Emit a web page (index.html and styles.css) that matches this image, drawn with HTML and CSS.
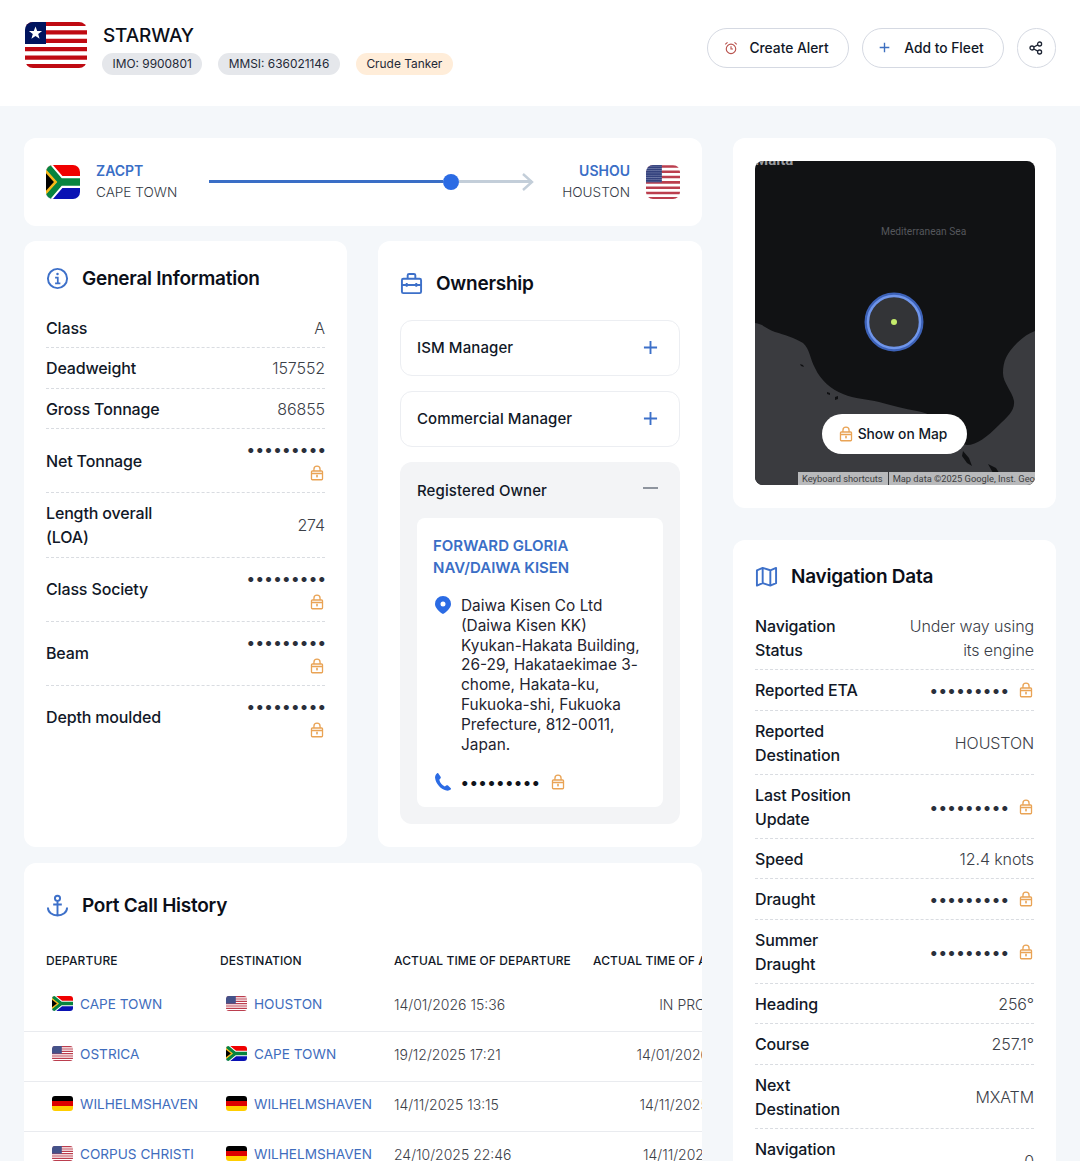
FILE: index.html
```html
<!DOCTYPE html>
<html lang="en">

<head>
  <meta charset="UTF-8" />
  <title>STARWAY – Vessel Details</title>
  <link rel="stylesheet" href="styles.css">
</head>

<body>

  <svg class="sprite" xmlns="http://www.w3.org/2000/svg">
    <defs>
      <pattern id="us-stars" width="3" height="3" patternUnits="userSpaceOnUse">
        <rect width="3" height="3" fill="#2b3a78" />
        <circle cx="1.5" cy="1.5" r=".7" fill="#c9cfe6" />
      </pattern>
    </defs>
    <symbol id="flag-lr" viewBox="0 0 62 46" preserveAspectRatio="none">
      <rect width="62" height="46" fill="#fff" />
      <path d="M0 2h62M0 10.4h62M0 18.8h62M0 27.2h62M0 35.6h62M0 44h62" stroke="#bf0a12" stroke-width="4.2" />
      <rect width="21" height="22" fill="#00145e" />
      <path d="M10.5 4.5l1.7 4.6h4.9l-3.9 3 1.4 4.7-4.1-2.8-4.1 2.8 1.4-4.7-3.9-3h4.9z" fill="#fff" />
    </symbol>
    <symbol id="flag-za" viewBox="0 0 60 45" preserveAspectRatio="none">
      <rect width="60" height="22.5" fill="#f00000" />
      <rect y="22.5" width="60" height="22.5" fill="#0a12b4" />
      <path d="M0 0L26 22.5H60M0 45L26 22.5" fill="none" stroke="#fff" stroke-width="16" />
      <path d="M0 0L26 22.5H60M0 45L26 22.5" fill="none" stroke="#07843f" stroke-width="10" />
      <path d="M0 6L20 22.5L0 39z" fill="#f8b818" />
      <path d="M0 11L14 22.5L0 34z" fill="#000" />
    </symbol>
    <symbol id="flag-us" viewBox="0 0 60 45" preserveAspectRatio="none">
      <rect width="60" height="45" fill="#fff" />
      <path d="M0 2h60M0 9h60M0 16h60M0 23h60M0 30h60M0 37h60M0 44h60" stroke="#bb3e4e" stroke-width="3.4" />
      <rect width="28" height="23" fill="url(#us-stars)" />
    </symbol>
    <symbol id="flag-de" viewBox="0 0 60 45" preserveAspectRatio="none">
      <rect width="60" height="15" fill="#000" />
      <rect y="15" width="60" height="15" fill="#dd0000" />
      <rect y="30" width="60" height="15" fill="#ffce00" />
    </symbol>
    <symbol id="i-lock" viewBox="0 0 16 18">
      <rect x="1.7" y="6.7" width="12.6" height="10" rx="1" fill="none" stroke="currentColor" stroke-width="1.5" />
      <path d="M4.5 6.7V4.600a3.500 3.500 0 0 1 7 0v2.100M1.700 9.600h12.600" fill="none" stroke="currentColor" stroke-width="1.5" />
      <rect x="7.100" y="11" width="1.800" height="3" fill="currentColor" />
    </symbol>
    <symbol id="i-plus" viewBox="0 0 16 16">
      <path d="M8 1v14M1 8h14" fill="none" stroke="currentColor" stroke-width="2" />
    </symbol>
  </svg>

  <header class="topbar">
    <div class="vessel">
      <svg class="flag flag-main"><use href="#flag-lr" /></svg>
      <div>
        <h1 class="vessel-name">STARWAY</h1>
        <div class="chips">
          <span class="chip">IMO: 9900801</span>
          <span class="chip">MMSI: 636021146</span>
          <span class="chip chip-type">Crude Tanker</span>
        </div>
      </div>
    </div>
    <div class="actions">
      <button class="btn">
        <svg class="btn-icon alarm" viewBox="0 0 16 16" fill="none" stroke="currentColor" stroke-width="1.3">
          <circle cx="8" cy="9" r="5.4" />
          <path d="M8 6v3.2h2.3M1.4 3.8L4 1.6M14.6 3.8L12 1.6" />
        </svg>
        Create Alert
      </button>
      <button class="btn">
        <svg class="btn-icon plus-blue"><use href="#i-plus" /></svg>
        Add to Fleet
      </button>
      <button class="btn btn-round" aria-label="Share">
        <svg class="share" viewBox="0 0 14 14" fill="none" stroke="#1d2433" stroke-width="1.3">
          <circle cx="3" cy="7" r="2" />
          <circle cx="10.6" cy="3" r="2" />
          <circle cx="10.6" cy="11" r="2" />
          <path d="M4.8 6l4-2.1M4.8 8l4 2.1" />
        </svg>
      </button>
    </div>
  </header>

  <main class="layout">
    <div class="col-main">

      <section class="card route">
        <svg class="flag flag-route"><use href="#flag-za" /></svg>
        <div class="port">
          <div class="port-code">ZACPT</div>
          <div class="port-name">CAPE TOWN</div>
        </div>
        <div class="track">
          <div class="track-done"></div>
          <div class="track-knob"></div>
          <div class="track-left"></div>
          <svg class="track-arrow" viewBox="0 0 14 20" fill="none" stroke="#c3ced9" stroke-width="2.4">
            <path d="M3 2l9 8-9 8" />
          </svg>
        </div>
        <div class="port port-end">
          <div class="port-code">USHOU</div>
          <div class="port-name">HOUSTON</div>
        </div>
        <svg class="flag flag-route"><use href="#flag-us" /></svg>
      </section>

      <div class="two-cols">
        <section class="card card-general">
          <h2 class="card-title">
            <svg class="title-icon" viewBox="0 0 24 24" fill="none" stroke="currentColor" stroke-width="2">
              <circle cx="12" cy="12" r="10" />
              <path d="M9.5 11H12.3V17M9.5 17H15" stroke-width="1.8" />
              <circle cx="12" cy="7.4" r="1.3" fill="currentColor" stroke="none" />
            </svg>
            General Information
          </h2>
          <div class="row"><span class="label">Class</span><span class="value">A</span></div>
          <div class="row"><span class="label">Deadweight</span><span class="value">157552</span></div>
          <div class="row"><span class="label">Gross Tonnage</span><span class="value">86855</span></div>
          <div class="row"><span class="label">Net Tonnage</span><span class="value stacked"><span class="dots">•••••••••</span><svg class="lock"><use href="#i-lock" /></svg></span></div>
          <div class="row"><span class="label">Length overall (LOA)</span><span class="value">274</span></div>
          <div class="row"><span class="label">Class Society</span><span class="value stacked"><span class="dots">•••••••••</span><svg class="lock"><use href="#i-lock" /></svg></span></div>
          <div class="row"><span class="label">Beam</span><span class="value stacked"><span class="dots">•••••••••</span><svg class="lock"><use href="#i-lock" /></svg></span></div>
          <div class="row row-last"><span class="label">Depth moulded</span><span class="value stacked"><span class="dots">•••••••••</span><svg class="lock"><use href="#i-lock" /></svg></span></div>
        </section>

        <section class="card card-owner">
          <h2 class="card-title">
            <svg class="title-icon" viewBox="0 0 24 24" fill="none" stroke="currentColor" stroke-width="2">
              <rect x="2" y="7" width="20" height="15" rx="1.5" />
              <path d="M8 7V3.500A1.500 1.500 0 0 1 9.500 2h5A1.500 1.500 0 0 1 16 3.500V7M2 13.500h20M7 11.500v4M17 11.500v4" />
            </svg>
            Ownership
          </h2>
          <div class="acc">
            <span>ISM Manager</span>
            <svg class="acc-plus"><use href="#i-plus" /></svg>
          </div>
          <div class="acc">
            <span>Commercial Manager</span>
            <svg class="acc-plus"><use href="#i-plus" /></svg>
          </div>
          <div class="acc-open">
            <div class="acc-head">
              <span>Registered Owner</span>
              <span class="acc-minus"></span>
            </div>
            <div class="owner-box">
              <div class="owner-name">FORWARD GLORIA NAV/DAIWA KISEN</div>
              <div class="owner-line">
                <svg class="owner-icon" viewBox="0 0 16 18">
                  <path fill-rule="evenodd" d="M8 0a8 8 0 0 1 8 8c0 3.800-4.500 8-8 10C4.500 16 0 11.800 0 8a8 8 0 0 1 8-8zm0 5.500a2.500 2.500 0 1 0 0 5 2.500 2.500 0 0 0 0-5z" fill="currentColor" />
                </svg>
                <p class="owner-addr">Daiwa Kisen Co Ltd<br>(Daiwa Kisen KK)<br>Kyukan-Hakata Building, 26-29, Hakataekimae 3-chome, Hakata-ku, Fukuoka-shi, Fukuoka Prefecture, 812-0011, Japan.</p>
              </div>
              <div class="owner-phone">
                <svg class="owner-icon" viewBox="0 0 16 18">
                  <path d="M3.200 0.300L5.600 3.800C6 4.400 5.900 5.100 5.400 5.600L4.300 6.800C5 9.800 7 12.300 9.800 13.500L11.200 12.500C11.800 12.100 12.500 12.100 13 12.600L15.800 15.200C16.200 15.600 16.100 16.200 15.700 16.500C14.500 17.500 12.900 17.900 11.300 17.500C5.300 16 1 10.800 0.100 5C-0.200 3.100 0.800 1.300 2.200 0.200C2.500 0 3 0 3.200 0.300Z" fill="currentColor" />
                </svg>
                <span class="dots">•••••••••</span>
                <svg class="lock"><use href="#i-lock" /></svg>
              </div>
            </div>
          </div>
        </section>
      </div>

      <section class="card card-ports">
        <h2 class="card-title">
          <svg class="title-icon" viewBox="0 0 24 24" fill="none" stroke="currentColor" stroke-width="2">
            <circle cx="12" cy="4.500" r="2.700" />
            <path d="M12 7.200V22.500M7.500 11h9M2 14c0 5 4.500 8.500 10 8.500S22 19 22 14" />
          </svg>
          Port Call History
        </h2>
        <div class="table-clip">
          <table class="ports">
            <thead>
              <tr>
                <th class="col-a">Departure</th>
                <th class="col-b">Destination</th>
                <th class="col-c">Actual Time of Departure</th>
                <th class="col-d">Actual Time of Arrival</th>
              </tr>
            </thead>
            <tbody>
              <tr>
                <td><a class="port-link"><svg class="flag flag-small"><use href="#flag-za" /></svg>CAPE TOWN</a></td>
                <td><a class="port-link"><svg class="flag flag-small"><use href="#flag-us" /></svg>HOUSTON</a></td>
                <td>14/01/2026 15:36</td>
                <td class="ta-right">IN PROGRESS</td>
              </tr>
              <tr>
                <td><a class="port-link"><svg class="flag flag-small"><use href="#flag-us" /></svg>OSTRICA</a></td>
                <td><a class="port-link"><svg class="flag flag-small"><use href="#flag-za" /></svg>CAPE TOWN</a></td>
                <td>19/12/2025 17:21</td>
                <td class="ta-right">14/01/2026 08:25</td>
              </tr>
              <tr>
                <td><a class="port-link"><svg class="flag flag-small"><use href="#flag-de" /></svg>WILHELMSHAVEN</a></td>
                <td><a class="port-link"><svg class="flag flag-small"><use href="#flag-de" /></svg>WILHELMSHAVEN</a></td>
                <td>14/11/2025 13:15</td>
                <td class="ta-right">14/11/2025 08:30</td>
              </tr>
              <tr>
                <td><a class="port-link"><svg class="flag flag-small"><use href="#flag-us" /></svg>CORPUS CHRISTI</a></td>
                <td><a class="port-link"><svg class="flag flag-small"><use href="#flag-de" /></svg>WILHELMSHAVEN</a></td>
                <td>24/10/2025 22:46</td>
                <td class="ta-right">14/11/2025 06:15</td>
              </tr>
            </tbody>
          </table>
        </div>
      </section>
    </div>

    <aside class="col-side">
      <section class="card card-map">
        <div class="map">
          <svg class="map-land" viewBox="0 0 280 324">
            <path d="M0 162C8 163 12 168 20 171C30 174 38 176 48 182C55 188 55 198 60 207C66 220 76 228 88 233C100 238 112 238 124 241C136 244 150 248 162 250C174 252 184 258 192 268C198 276 204 283 212 284C222 284 232 276 244 264C252 256 260 250 259 240C257 230 248 222 248 212C248 200 252 192 262 182C268 176 274 172 280 170V324H0Z" fill="#3a3b3f" />
            <path d="M208 290l6 7 3 8-5-3-5-7zM233 303l8 4 5 8-8-3zM45 203l3 1 1 2-3-1zM72 231l3 1 0 2-3-1zM80 236l3-1 0 3-3 1z" fill="#101113" />
            <circle cx="139" cy="161" r="28" fill="#333437" stroke="#3d62b8" stroke-width="3" />
            <circle cx="139" cy="161" r="26" fill="none" stroke="#6f95ea" stroke-width="2.5" />
            <circle cx="139" cy="161" r="3" fill="#c5ec6b" />
          </svg>
          <span class="map-malta">Malta</span>
          <span class="map-sea">Mediterranean Sea</span>
          <button class="map-btn"><svg class="lock"><use href="#i-lock" /></svg>Show on Map</button>
          <div class="map-attr">
            <span>Keyboard shortcuts</span>
            <span>Map data ©2025 Google, Inst. Geogr. Nacional</span>
          </div>
        </div>
      </section>

      <section class="card card-nav">
        <h2 class="card-title">
          <svg class="title-icon" viewBox="0 0 24 24" fill="none" stroke="currentColor" stroke-width="2">
            <path d="M2 5.500L8 3L16 5.500L22 3V19L16 21.500L8 19L2 21.500ZM8 3V19M16 5.500V21.500" stroke-linejoin="round" />
          </svg>
          Navigation Data
        </h2>
        <div class="row"><span class="label">Navigation Status</span><span class="value">Under way using its engine</span></div>
        <div class="row"><span class="label">Reported ETA</span><span class="value inline"><span class="dots">•••••••••</span><svg class="lock"><use href="#i-lock" /></svg></span></div>
        <div class="row"><span class="label">Reported Destination</span><span class="value">HOUSTON</span></div>
        <div class="row"><span class="label">Last Position Update</span><span class="value inline"><span class="dots">•••••••••</span><svg class="lock"><use href="#i-lock" /></svg></span></div>
        <div class="row"><span class="label">Speed</span><span class="value">12.4 knots</span></div>
        <div class="row"><span class="label">Draught</span><span class="value inline"><span class="dots">•••••••••</span><svg class="lock"><use href="#i-lock" /></svg></span></div>
        <div class="row"><span class="label">Summer Draught</span><span class="value inline"><span class="dots">•••••••••</span><svg class="lock"><use href="#i-lock" /></svg></span></div>
        <div class="row"><span class="label">Heading</span><span class="value">256°</span></div>
        <div class="row"><span class="label">Course</span><span class="value">257.1°</span></div>
        <div class="row"><span class="label">Next Destination</span><span class="value">MXATM</span></div>
        <div class="row"><span class="label">Navigation<br>Area</span><span class="value">0</span></div>
      </section>
    </aside>
  </main>

</body>

</html>
```

FILE: styles.css
```css
html,
body {
  height: 1161px;
  overflow: hidden;
}

body {
  margin: 0;
  font-family: Inter, "Liberation Sans", sans-serif;
  font-size: 16px;
  color: #111827;
  background: #f4f7fa;
}

h1,
h2,
p {
  margin: 0;
}

.sprite {
  display: block;
  width: 0;
  height: 0;
}

.flag {
  display: block;
  flex: none;
  overflow: hidden;
}

.flag-main {
  width: 62px;
  height: 46px;
  border-radius: 8px;
}

.flag-route {
  width: 34px;
  height: 34px;
  border-radius: 7px;
}

.flag-small {
  width: 21px;
  height: 15px;
  border-radius: 3px;
}

/* header */
.topbar {
  height: 106px;
  box-sizing: border-box;
  background: #fff;
  padding: 22px 24px 0 25px;
  display: flex;
  justify-content: space-between;
  align-items: flex-start;
}

.vessel {
  display: flex;
  gap: 15px;
}

.vessel-name {
  margin-left: 1px;
  font-size: 19px;
  font-weight: 500;
  letter-spacing: -0.15px;
  line-height: 28px;
  color: #0b0f19;
}

.chips {
  display: flex;
  gap: 16px;
  margin-top: 3px;
}

.chip {
  height: 22px;
  line-height: 22px;
  padding: 0 10.500px;
  border-radius: 11px;
  background: #e5e7eb;
  font-size: 11.900px;
  color: #1f2937;
}

.chip-type {
  background: #ffedd9;
}

.actions {
  display: flex;
  gap: 13px;
  padding-top: 6px;
}

.btn {
  width: 142px;
  height: 40px;
  border: 1px solid #d5d9e2;
  border-radius: 20px;
  background: #fff;
  font: 500 13.800px Inter, "Liberation Sans", sans-serif;
  color: #111827;
  display: flex;
  align-items: center;
  justify-content: center;
  gap: 11px;
  padding: 0 3px 1px 0;
}

.btn-round {
  width: 39px;
  padding-right: 1px;
}

.btn-icon {
  width: 14px;
  height: 14px;
}

.alarm {
  color: #b9544f;
}

.plus-blue {
  width: 11px;
  height: 11px;
  color: #3d6fc0;
  margin-right: 3px;
}

.share {
  width: 14px;
  height: 14px;
}

/* layout */
.layout {
  display: grid;
  grid-template-columns: 678px 323px;
  gap: 31px;
  padding: 32px 24px 0;
}

.col-main {
  display: flex;
  flex-direction: column;
  gap: 15px;
}

.col-side {
  display: flex;
  flex-direction: column;
  gap: 32px;
}

.card {
  background: #fff;
  border-radius: 12px;
}

.card-title {
  display: flex;
  align-items: center;
  gap: 13px;
  padding-top: 2px;
  font-size: 19px;
  font-weight: 600;
  letter-spacing: -0.25px;
  line-height: 28px;
  color: #0b0f19;
}

.title-icon {
  width: 23px;
  height: 23px;
  margin-top: -2px;
  color: #3d70c9;
  flex: none;
}

/* route */
.route {
  height: 88px;
  box-sizing: border-box;
  padding: 0 22px;
  display: flex;
  align-items: center;
}

.port {
  margin: -2px 0 0 16px;
  font-size: 14px;
  line-height: 21px;
}

.port-end {
  margin-left: 0;
  margin-right: 16px;
  text-align: right;
}

.port-code {
  font-weight: 600;
  color: #3a6ec6;
}

.port-name {
  margin-top: 1px;
  font-size: 13.600px;
  font-weight: 300;
  color: #333a45;
}

.track {
  flex: 1;
  display: flex;
  align-items: center;
  margin: -1px 28px 0 32px;
}

.track-done {
  width: 234px;
  height: 3px;
  background: #3a6ec6;
}

.track-knob {
  width: 16px;
  height: 16px;
  flex: none;
  border-radius: 50%;
  background: #2b6be4;
}

.track-left {
  flex: 1;
  height: 3px;
  background: #c3ced9;
}

.track-arrow {
  width: 14px;
  height: 20px;
  flex: none;
  margin-left: -12px;
}

/* info rows */
.two-cols {
  display: grid;
  grid-template-columns: 323px 324px;
  gap: 31px;
  margin-bottom: 1px;
}

.card-general {
  height: 606px;
  box-sizing: border-box;
  padding: 22px 22px 0;
}

.card-general .card-title {
  margin-bottom: 14.500px;
}

.row {
  display: flex;
  justify-content: space-between;
  align-items: center;
  gap: 10px;
  padding: 8px 0 7.500px;
  border-bottom: 1px dashed #d9dce1;
  line-height: 24px;
}

.row-last {
  border-bottom: none;
}

.label {
  flex: 0 0 120px;
  font-weight: 500;
  letter-spacing: -0.150px;
  color: #111827;
}

.value {
  max-width: 130px;
  text-align: right;
  font-weight: 300;
  letter-spacing: -0.100px;
  color: #3b4048;
}

.stacked {
  display: flex;
  flex-direction: column;
  align-items: flex-end;
  max-width: none;
}

.inline {
  display: flex;
  align-items: center;
  gap: 9px;
  max-width: none;
  padding-right: 1px;
}

.dots {
  font-weight: 700;
  letter-spacing: 1.300px;
  color: #2a2f3a;
  line-height: 24px;
  white-space: nowrap;
}

.stacked .dots {
  margin-right: -2px;
}

.lock {
  width: 14px;
  height: 16px;
  flex: none;
  color: #e9a355;
}

.stacked .lock {
  margin: 4px 1px 3.500px 0;
}

/* ownership */
.card-owner {
  padding: 27px 22px 23px;
}

.card-owner .card-title {
  margin-bottom: 22px;
}

.acc {
  height: 56px;
  box-sizing: border-box;
  border: 1px solid #eceef2;
  border-radius: 12px;
  padding: 0 21px 2px 16px;
  margin-bottom: 15px;
  display: flex;
  justify-content: space-between;
  align-items: center;
  font-size: 15px;
  font-weight: 500;
  letter-spacing: 0.100px;
}

.acc-plus {
  width: 15px;
  height: 15px;
  color: #3d70c9;
}

.acc-open {
  background: #f3f4f6;
  border-radius: 12px;
  padding: 0 17px 17px;
}

.acc-head {
  height: 56px;
  display: flex;
  justify-content: space-between;
  align-items: center;
  font-size: 15px;
  font-weight: 500;
  letter-spacing: 0.100px;
  padding-right: 5px;
}

.acc-minus {
  width: 15px;
  height: 2.500px;
  background: #8e949e;
  margin-top: -4px;
}

.owner-box {
  background: #fff;
  border-radius: 8px;
  padding: 17px 16px 13px;
}

.owner-name {
  font-size: 15px;
  font-weight: 600;
  line-height: 22px;
  color: #3a6ec6;
  margin-bottom: 15px;
}

.owner-line {
  display: flex;
  gap: 10px;
  align-items: flex-start;
}

.owner-icon {
  width: 16px;
  height: 18px;
  flex: none;
  margin: 2px 2px 0;
  color: #2b6be4;
}

.owner-addr {
  font-size: 15.400px;
  line-height: 19.800px;
  color: #1f2430;
  font-weight: 400;
  margin: 2px 0 0 -2px;
}

.owner-phone {
  display: flex;
  align-items: center;
  gap: 11px;
  margin-top: 16px;
}

.owner-phone .owner-icon {
  margin: 0 2px;
}

.owner-phone .dots {
  margin-left: -3px;
  color: #10131a;
}

.owner-phone .lock {
  margin-left: -1px;
}

/* port calls */
.card-ports {
  padding-top: 27px;
  height: 400px;
}

.card-ports .card-title {
  padding-left: 22px;
  margin-bottom: 20px;
}

.table-clip {
  overflow: hidden;
}

.ports {
  border-collapse: collapse;
  table-layout: fixed;
  width: 749px;
}

.col-a,
.col-b {
  width: 174px;
}

.col-c {
  width: 199px;
}

.col-d {
  width: 202px;
}

.ports th {
  height: 41px;
  box-sizing: border-box;
  padding: 0 0 1px 22px;
  text-align: left;
  font-size: 12px;
  font-weight: 500;
  letter-spacing: 0.100px;
  text-transform: uppercase;
  white-space: nowrap;
  color: #111827;
}

.ports td {
  height: 50px;
  box-sizing: border-box;
  padding: 0 0 3px 22px;
  border-bottom: 1px solid #e9ebef;
  font-size: 14px;
  font-weight: 300;
  color: #3b4048;
  white-space: nowrap;
}

.ports td.ta-right {
  padding: 0 22px 3px 0;
  text-align: right;
}

.port-link {
  display: flex;
  align-items: center;
  gap: 7px;
  margin: -2px 0 0 6px;
  font-size: 13.600px;
  font-weight: 400;
  color: #3f6dbd;
}

/* map */
.card-map {
  padding: 23px 22px;
  height: 370px;
  box-sizing: border-box;
}

.map {
  position: relative;
  height: 324px;
  width: 280px;
  background: #111214;
  border-radius: 8px;
  overflow: hidden;
}

.map-land {
  display: block;
  width: 280px;
  height: 324px;
}

.map-malta {
  position: absolute;
  left: 0;
  top: -10px;
  font-family: Roboto, sans-serif;
  font-size: 15px;
  font-weight: 700;
  color: #9a9b9f;
}

.map-sea {
  position: absolute;
  left: 126px;
  top: 65px;
  font-family: Roboto, sans-serif;
  font-size: 10.200px;
  color: #55575c;
  white-space: nowrap;
}

.map-btn {
  position: absolute;
  left: 67px;
  top: 253px;
  width: 145px;
  height: 40px;
  border: none;
  border-radius: 20px;
  background: #fff;
  font: 500 13.800px Inter, "Liberation Sans", sans-serif;
  color: #111827;
  display: flex;
  align-items: center;
  justify-content: center;
  gap: 5px;
  padding: 0 3px 0 0;
}

.map-attr {
  position: absolute;
  left: 43px;
  top: 311px;
  height: 13px;
  display: flex;
  gap: 1px;
  font-family: Roboto, sans-serif;
  font-size: 9.300px;
  line-height: 13px;
  color: #3c3d40;
  white-space: nowrap;
}

.map-attr span {
  background: #b8b9bb;
  padding: 0 5px 0 4px;
}

.card-nav {
  padding: 21px 22px 0;
  height: 640px;
}

.card-nav .row {
  padding-bottom: 7.300px;
}

.card-nav .card-title {
  margin-bottom: 15px;
}
```
